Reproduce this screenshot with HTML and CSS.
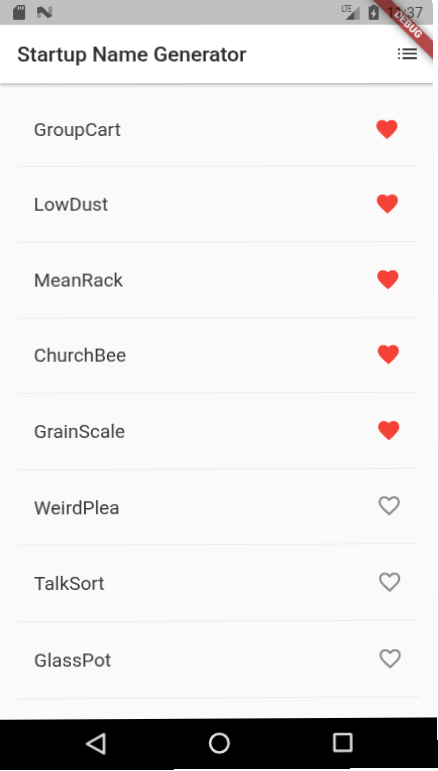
FILE: index.html
```html
<!DOCTYPE html>
<html lang="en">
<head>
<meta charset="utf-8">
<title>Startup Name Generator</title>
<link rel="stylesheet" href="styles.css">
</head>
<body>
<svg class="symbols" aria-hidden="true">
  <symbol id="heart" viewBox="0 0 24 24"><path d="M12 21.35l-1.45-1.32C5.4 15.36 2 12.28 2 8.5 2 5.42 4.42 3 7.5 3c1.74 0 3.41.81 4.5 2.09C13.09 3.81 14.76 3 16.5 3 19.58 3 22 5.42 22 8.5c0 3.78-3.4 6.86-8.55 11.54L12 21.35z"/></symbol>
  <symbol id="heart-outline" viewBox="0 0 24 24"><path d="M16.5 3c-1.74 0-3.41.81-4.5 2.09C10.91 3.81 9.24 3 7.5 3 4.42 3 2 5.42 2 8.5c0 3.78 3.4 6.86 8.55 11.54L12 21.35l1.45-1.32C18.6 15.36 22 12.28 22 8.5 22 5.42 19.58 3 16.5 3zm-4.4 15.55l-.1.1-.1-.1C7.14 14.24 4 11.39 4 8.5 4 6.5 5.5 5 7.5 5c1.54 0 3.04.99 3.57 2.36h1.87C13.46 5.99 14.96 5 16.5 5c2 0 3.5 1.5 3.5 3.5 0 2.89-3.14 5.74-7.9 10.05z"/></symbol>
</svg>
<div class="screen">
  <header class="top">
    <div class="status">
      <svg class="sd" viewBox="4 2 16 20"><path d="M18 2h-8L4.02 8 4 20c0 1.1.9 2 2 2h12c1.1 0 2-.9 2-2V4c0-1.1-.9-2-2-2zm-6 6h-2V4h2v4zm3 0h-2V4h2v4zm3 0h-2V4h2v4z"/></svg>
      <svg class="nougat" viewBox="0 0 16 13"><path class="faint" d="M0 2l4-1.5V12l-4 .8zM12 1l4-.8v10.300l-4 2z"/><path d="M0 1.800L5 .3l6 6.200 5 4-4.600 2.300L4.500 6.500 0 8z"/></svg>
      <span class="spacer"></span>
      <div class="signal">
        <span class="lte">LTE</span>
        <svg viewBox="0 0 14 14"><path class="faint" d="M14 0v14H0z"/><path d="M8.500 5.500v8.500H0z"/></svg>
      </div>
      <svg class="battery" viewBox="7 2 10 20" preserveAspectRatio="none"><path d="M15.67 4H14V2h-4v2H8.33C7.6 4 7 4.6 7 5.33v15.33C7 21.4 7.6 22 8.33 22h7.33c.74 0 1.34-.6 1.34-1.33V5.33C17 4.6 16.4 4 15.67 4zM11 20v-5.5H9L13 7v5.5h2L11 20z"/></svg>
      <time class="clock">11:37</time>
    </div>
    <div class="appbar">
      <h1>Startup Name Generator</h1>
      <svg class="menu" viewBox="0 0 24 24"><path class="mid" d="M3 6.800h1.800v1.500H3zM3 11h1.800v1.500H3zM3 15.300h1.800v1.500H3zM7.300 6.800H21v1.500H7.300zM7.300 11H21v1.500H7.300z"/><path d="M7.300 15.300H21v1.600H7.300z"/></svg>
    </div>
  </header>
  <main class="list">
    <div class="row"><span>GroupCart</span><svg class="fav"><use href="#heart"/></svg></div>
    <div class="row"><span>LowDust</span><svg class="fav"><use href="#heart"/></svg></div>
    <div class="row"><span>MeanRack</span><svg class="fav"><use href="#heart"/></svg></div>
    <div class="row"><span>ChurchBee</span><svg class="fav"><use href="#heart"/></svg></div>
    <div class="row"><span>GrainScale</span><svg class="fav"><use href="#heart"/></svg></div>
    <div class="row"><span>WeirdPlea</span><svg><use href="#heart-outline"/></svg></div>
    <div class="row"><span>TalkSort</span><svg><use href="#heart-outline"/></svg></div>
    <div class="row"><span>GlassPot</span><svg><use href="#heart-outline"/></svg></div>
  </main>
  <nav class="navbar">
    <svg viewBox="0 0 24 24"><path d="M20 2.8v18.4L3.6 12z"/></svg>
    <svg viewBox="0 0 24 24"><circle cx="12" cy="12" r="9"/></svg>
    <svg viewBox="0 0 24 24"><rect x="3.9" y="3.9" width="16.2" height="16.2" rx=".6"/></svg>
  </nav>
  <div class="banner-clip"><div class="banner">DEBUG</div></div>
</div>
</body>
</html>
```
FILE: styles.css
```css
* { box-sizing: border-box; }

html, body {
  margin: 0;
  height: 771px;
  overflow: hidden;
  background: #fff;
  font-family: Roboto, "Liberation Sans", sans-serif;
}

.symbols { position: absolute; width: 0; height: 0; }

svg { display: block; flex: none; }

/* The phone screen, seen at a slight perspective */
.screen {
  position: relative;
  width: 432px;
  height: 768px;
  display: flex;
  flex-direction: column;
  overflow: hidden;
  background: #fafafa;
  transform-origin: 0 0;
  transform: matrix3d(1.004377, 0, 0, 0.000007444, 0, 0.991299, 0, -0.000015518, 0, 0, 1, 0, 0, 0, 0, 1);
}

.top {
  position: relative;
  flex: none;
  background: #fff;
  box-shadow: 0 2px 4px rgba(0, 0, 0, .2), 0 1px 1px rgba(0, 0, 0, .12);
}

.status {
  position: relative;
  z-index: 2;
  display: flex;
  align-items: center;
  height: 25px;
  padding: 0 9.5px 0 13px;
  background: rgba(0, 0, 0, .25);
  fill: #505050;
}

.sd { width: 12px; height: 15px; }
.nougat { width: 15px; height: 12.5px; margin-left: 12px; }
.faint { fill: #8e8e8e; }
.spacer { flex: 1; }

.signal {
  display: flex;
  align-items: flex-start;
  height: 15px;
  margin-right: 9px;
}
.signal svg { width: 14px; height: 14px; margin-left: -6px; margin-top: 1px; }

.lte {
  width: 10px;
  color: #505050;
  font-size: 9.5px;
  font-weight: 500;
  line-height: 8px;
  transform: scaleX(.64);
  transform-origin: 0 0;
}

.battery { width: 10px; height: 15px; margin-right: 8px; }

.clock {
  position: relative;
  top: 1px;
  color: rgba(0, 0, 0, .65);
  font-size: 14.7px;
  line-height: 25px;
}

.appbar {
  display: flex;
  align-items: center;
  justify-content: space-between;
  height: 59px;
  padding: 0 12.6px 0 17px;
}

h1 {
  margin: 0;
  color: #2c2c2c;
  font-size: 21px;
  font-weight: 500;
  line-height: 30px;
}

.menu { width: 25px; height: 25px; fill: #000; }
.menu .mid { fill: #222; }

.list {
  flex: 1;
  min-height: 0;
  padding: 8.8px 16.8px 0;
}

.row {
  display: flex;
  align-items: center;
  justify-content: space-between;
  height: 75.6px;
  padding: 0 16.8px;
  border-bottom: 1px solid #ededed;
  color: #3c3c3c;
  font-size: 18.9px;
}
.row svg { width: 25.2px; height: 25.2px; fill: #8a8a8a; }
.row .fav { fill: #f44336; }

.navbar {
  flex: none;
  display: flex;
  align-items: center;
  justify-content: center;
  gap: 97.3px;
  height: 50.4px;
  padding-bottom: .6px;
  background: #000;
}
.navbar svg {
  width: 24.5px;
  height: 24.5px;
  fill: none;
  stroke: #dcdcdc;
  stroke-width: 2.5;
  stroke-linejoin: round;
}

/* Corner ribbon, drawn under the status bar tint */
.banner-clip {
  position: absolute;
  top: 0;
  right: 0;
  width: 90px;
  height: 90px;
  overflow: hidden;
  pointer-events: none;
}
.banner {
  position: absolute;
  left: 14.6px;
  top: 18.9px;
  width: 100px;
  height: 12.6px;
  transform: rotate(45deg);
  background: #b34848;
  box-shadow: 0 0 8px rgba(0, 0, 0, .5);
  color: #fff;
  font-size: 10.7px;
  font-weight: 900;
  line-height: 12.8px;
  text-align: center;
}
```
